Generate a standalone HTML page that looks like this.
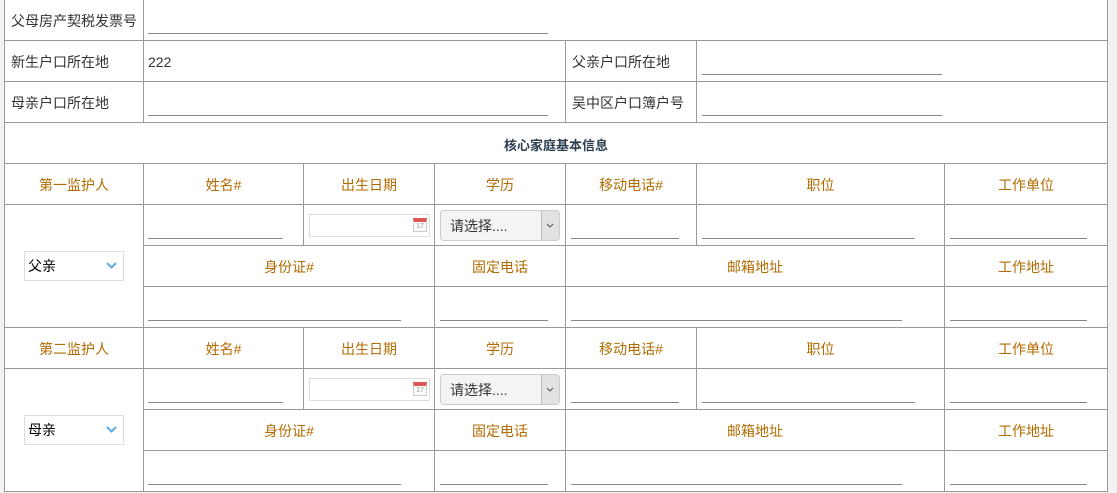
<!DOCTYPE html>
<html><head><meta charset="utf-8"><style>
body{margin:0;width:1117px;height:493px;background:#f2f2f2;position:relative;overflow:hidden;font-family:"Liberation Sans","Noto Sans CJK SC",sans-serif;font-size:14px;color:#333}
#w{position:absolute;left:4px;top:0;width:1104px;height:492px;background:#fff;border-left:1px solid #999;box-sizing:border-box}
.c{position:absolute;box-sizing:border-box;border-right:1px solid #999;border-bottom:1px solid #999;display:flex;align-items:center;justify-content:center;color:#b36b00;padding-top:2px}
.l{justify-content:flex-start;padding-left:6px;color:#333}
.u{position:absolute;height:1px;background:#888}
.h{color:#2c3e50;font-weight:bold;font-size:13px}
.date{position:absolute;width:121px;height:23px;border:1px solid #ddd;box-sizing:border-box;background:#fff}
.date i{position:absolute;right:2px;top:3px;width:14px;height:14px;border:1px solid #ccc;border-top:4px solid #e05555;box-sizing:border-box;background:#fafafa;font-style:normal;font-size:7px;color:#999;line-height:9px;text-align:center}
.sel{position:absolute;width:120px;height:31px;border:1px solid #ccc;border-radius:4px;box-sizing:border-box;background:#f4f4f4;color:#333;line-height:30px;padding-left:9px}
.sel b{position:absolute;right:0;top:0;width:17px;height:29px;background:#e2e2e2;border-left:1px solid #bbb;border-radius:0 3px 3px 0}
.sel b svg{position:absolute;left:4px;top:12px}
.gs{position:absolute;left:24px;width:100px;height:30px;border:1px solid #ddd;box-sizing:border-box;color:#000;line-height:29px;padding-left:3px;background:#fff}
.gs svg{position:absolute;right:6px;top:10px}
</style></head><body>
<div id="w"></div>
<div class="c l" style="left:5px;top:0;width:139px;height:41px">父母房产契税发票号</div>
<div class="c" style="left:144px;top:0;width:964px;height:41px"></div>
<div class="u" style="left:148px;top:33px;width:400px"></div>
<div class="c l" style="left:5px;top:41px;width:139px;height:41px">新生户口所在地</div>
<div class="c l" style="left:144px;top:41px;width:422px;height:41px;padding-left:4px">222</div>
<div class="c l" style="left:566px;top:41px;width:131px;height:41px">父亲户口所在地</div>
<div class="c" style="left:697px;top:41px;width:411px;height:41px"></div>
<div class="u" style="left:702px;top:74px;width:240px"></div>
<div class="c l" style="left:5px;top:82px;width:139px;height:41px">母亲户口所在地</div>
<div class="c" style="left:144px;top:82px;width:422px;height:41px"></div>
<div class="c l" style="left:566px;top:82px;width:131px;height:41px">吴中区户口簿户号</div>
<div class="c" style="left:697px;top:82px;width:411px;height:41px"></div>
<div class="u" style="left:148px;top:115px;width:400px"></div>
<div class="u" style="left:702px;top:115px;width:240px"></div>
<div class="c h" style="left:5px;top:123px;width:1103px;height:41px">核心家庭基本信息</div>

<div class="c" style="left:5px;top:164px;width:139px;height:41px">第一监护人</div>
<div class="c" style="left:144px;top:164px;width:160px;height:41px">姓名#</div>
<div class="c" style="left:304px;top:164px;width:131px;height:41px">出生日期</div>
<div class="c" style="left:435px;top:164px;width:131px;height:41px">学历</div>
<div class="c" style="left:566px;top:164px;width:131px;height:41px">移动电话#</div>
<div class="c" style="left:697px;top:164px;width:248px;height:41px">职位</div>
<div class="c" style="left:945px;top:164px;width:163px;height:41px">工作单位</div>
<div class="c" style="left:5px;top:205px;width:139px;height:123px"></div>
<div class="c" style="left:144px;top:205px;width:160px;height:41px"></div>
<div class="c" style="left:304px;top:205px;width:131px;height:41px"></div>
<div class="c" style="left:435px;top:205px;width:131px;height:41px"></div>
<div class="c" style="left:566px;top:205px;width:131px;height:41px"></div>
<div class="c" style="left:697px;top:205px;width:248px;height:41px"></div>
<div class="c" style="left:945px;top:205px;width:163px;height:41px"></div>
<div class="c" style="left:144px;top:246px;width:291px;height:41px">身份证#</div>
<div class="c" style="left:435px;top:246px;width:131px;height:41px">固定电话</div>
<div class="c" style="left:566px;top:246px;width:379px;height:41px">邮箱地址</div>
<div class="c" style="left:945px;top:246px;width:163px;height:41px">工作地址</div>
<div class="c" style="left:144px;top:287px;width:291px;height:41px"></div>
<div class="c" style="left:435px;top:287px;width:131px;height:41px"></div>
<div class="c" style="left:566px;top:287px;width:379px;height:41px"></div>
<div class="c" style="left:945px;top:287px;width:163px;height:41px"></div>
<div class="u" style="left:148px;top:238px;width:135px"></div>
<div class="u" style="left:571px;top:238px;width:108px"></div>
<div class="u" style="left:702px;top:238px;width:213px"></div>
<div class="u" style="left:950px;top:238px;width:137px"></div>
<div class="u" style="left:148px;top:320px;width:253px"></div>
<div class="u" style="left:440px;top:320px;width:108px"></div>
<div class="u" style="left:571px;top:320px;width:331px"></div>
<div class="u" style="left:950px;top:320px;width:137px"></div>
<div class="date" style="left:309px;top:214px"><i>17</i></div>
<div class="sel" style="left:440px;top:210px">请选择....<b><svg width="8" height="5" viewBox="0 0 8 5"><path d="M1 1l3 3 3-3" fill="none" stroke="#555" stroke-width="1"/></svg></b></div>
<div class="gs" style="top:251px">父亲<svg width="11" height="7" viewBox="0 0 11 7"><path d="M1 1l4.5 4.5L10 1" fill="none" stroke="#5aa9e6" stroke-width="2"/></svg></div>

<div class="c" style="left:5px;top:328px;width:139px;height:41px">第二监护人</div>
<div class="c" style="left:144px;top:328px;width:160px;height:41px">姓名#</div>
<div class="c" style="left:304px;top:328px;width:131px;height:41px">出生日期</div>
<div class="c" style="left:435px;top:328px;width:131px;height:41px">学历</div>
<div class="c" style="left:566px;top:328px;width:131px;height:41px">移动电话#</div>
<div class="c" style="left:697px;top:328px;width:248px;height:41px">职位</div>
<div class="c" style="left:945px;top:328px;width:163px;height:41px">工作单位</div>
<div class="c" style="left:5px;top:369px;width:139px;height:123px"></div>
<div class="c" style="left:144px;top:369px;width:160px;height:41px"></div>
<div class="c" style="left:304px;top:369px;width:131px;height:41px"></div>
<div class="c" style="left:435px;top:369px;width:131px;height:41px"></div>
<div class="c" style="left:566px;top:369px;width:131px;height:41px"></div>
<div class="c" style="left:697px;top:369px;width:248px;height:41px"></div>
<div class="c" style="left:945px;top:369px;width:163px;height:41px"></div>
<div class="c" style="left:144px;top:410px;width:291px;height:41px">身份证#</div>
<div class="c" style="left:435px;top:410px;width:131px;height:41px">固定电话</div>
<div class="c" style="left:566px;top:410px;width:379px;height:41px">邮箱地址</div>
<div class="c" style="left:945px;top:410px;width:163px;height:41px">工作地址</div>
<div class="c" style="left:144px;top:451px;width:291px;height:41px"></div>
<div class="c" style="left:435px;top:451px;width:131px;height:41px"></div>
<div class="c" style="left:566px;top:451px;width:379px;height:41px"></div>
<div class="c" style="left:945px;top:451px;width:163px;height:41px"></div>
<div class="u" style="left:148px;top:402px;width:135px"></div>
<div class="u" style="left:571px;top:402px;width:108px"></div>
<div class="u" style="left:702px;top:402px;width:213px"></div>
<div class="u" style="left:950px;top:402px;width:137px"></div>
<div class="u" style="left:148px;top:484px;width:253px"></div>
<div class="u" style="left:440px;top:484px;width:108px"></div>
<div class="u" style="left:571px;top:484px;width:331px"></div>
<div class="u" style="left:950px;top:484px;width:137px"></div>
<div class="date" style="left:309px;top:378px"><i>17</i></div>
<div class="sel" style="left:440px;top:374px">请选择....<b><svg width="8" height="5" viewBox="0 0 8 5"><path d="M1 1l3 3 3-3" fill="none" stroke="#555" stroke-width="1"/></svg></b></div>
<div class="gs" style="top:415px">母亲<svg width="11" height="7" viewBox="0 0 11 7"><path d="M1 1l4.5 4.5L10 1" fill="none" stroke="#5aa9e6" stroke-width="2"/></svg></div>
</body></html>
